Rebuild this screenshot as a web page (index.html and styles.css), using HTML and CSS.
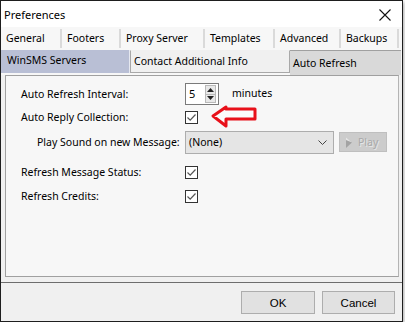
FILE: index.html
```html
<!DOCTYPE html>
<html>
<head>
<meta charset="utf-8">
<link rel="stylesheet" href="styles.css">
</head>
<body>
<div class="window">
  <div class="titlebar">
    <span class="title">Preferences</span>
    <svg class="close" width="12" height="12" viewBox="0 0 12 12"><path d="M0.5,0.5 L11.5,11.5 M11.5,0.5 L0.5,11.5" stroke="#111" stroke-width="1.1" fill="none"/></svg>
  </div>
  <div class="tabrow1">
    <div class="tab">General</div>
    <div class="tab">Footers</div>
    <div class="tab">Proxy Server</div>
    <div class="tab">Templates</div>
    <div class="tab">Advanced</div>
    <div class="tab">Backups</div>
  </div>
  <div class="tabrow2">
    <div class="tab2 hot">WinSMS Servers</div>
    <div class="tab2 plain">Contact Additional Info</div>
    <div class="tab2 active">Auto Refresh</div>
  </div>
  <div class="client">
    <div class="panel">
      <div class="row r1">
        <span class="label">Auto Refresh Interval:</span>
        <div class="spin">
          <span class="spinval">5</span>
          <div class="spinbtns">
            <div class="sb"><svg width="7" height="4" viewBox="0 0 7 4"><path d="M3.5,0 L7,4 L0,4 Z" fill="#222"/></svg></div>
            <div class="sb"><svg width="7" height="4" viewBox="0 0 7 4"><path d="M0,0 L7,0 L3.5,4 Z" fill="#222"/></svg></div>
          </div>
        </div>
        <span class="unit">minutes</span>
      </div>
      <div class="row r2">
        <span class="label">Auto Reply Collection:</span>
        <span class="check"><svg width="11" height="11" viewBox="0 0 11 11"><path d="M1.5,5.5 L4.2,8.2 L9.5,2.5" stroke="#555" stroke-width="1.2" fill="none"/></svg></span>
        <svg class="arrow" width="50" height="26" viewBox="0 0 50 26"><path d="M3,12 L16,3 L16,5 L45,5 L45,15 L16,15 L16,22 Z" stroke="#e8111a" stroke-width="3" stroke-linejoin="round" fill="#fbfbfb"/></svg>
      </div>
      <div class="row r3">
        <span class="label indent">Play Sound on new Message:</span>
        <div class="combo">
          <span>(None)</span>
          <svg width="9" height="5" viewBox="0 0 9 5"><path d="M0.5,0.5 L4.5,4.5 L8.5,0.5" stroke="#444" stroke-width="1" fill="none"/></svg>
        </div>
        <div class="play">
          <svg width="7" height="11" viewBox="0 0 7 11"><path d="M0,0 L6,5.5 L0,11 Z" fill="#a3a3a3"/><path d="M0,0 L6,5.5 L0,3 Z" fill="#e4e4e4"/></svg>
          <span>Play</span>
        </div>
      </div>
      <div class="row r4">
        <span class="label">Refresh Message Status:</span>
        <span class="check"><svg width="11" height="11" viewBox="0 0 11 11"><path d="M1.5,5.5 L4.2,8.2 L9.5,2.5" stroke="#555" stroke-width="1.2" fill="none"/></svg></span>
      </div>
      <div class="row r5">
        <span class="label">Refresh Credits:</span>
        <span class="check"><svg width="11" height="11" viewBox="0 0 11 11"><path d="M1.5,5.5 L4.2,8.2 L9.5,2.5" stroke="#555" stroke-width="1.2" fill="none"/></svg></span>
      </div>
    </div>
  </div>
  <div class="footer">
    <button class="btn ok">OK</button>
    <button class="btn cancel">Cancel</button>
  </div>
</div>
</body>
</html>
```
FILE: styles.css
```css
* { box-sizing: border-box; }
html, body { margin: 0; padding: 0; background: #ffffff; }
body { font-family: "Noto Sans", "Open Sans", sans-serif; font-size: 10.5px; color: #000; white-space: nowrap; }

.window {
  width: 403px;
  height: 322px;
  border: 1px solid #1e1e1e;
  background: #f0f0f0;
  display: flex;
  flex-direction: column;
  box-shadow: 1px 2px 4px rgba(0,0,0,0.35);
}

.titlebar {
  height: 26px;
  background: #ffffff;
  display: flex;
  align-items: center;
  justify-content: space-between;
  padding: 0 11px 0 3px;
  flex: none;
}
.title { font-size: 11px; }
.close { display: block; margin-top: 1px; }

.tabrow1 {
  height: 22px;
  background: #f7f7f7;
  display: flex;
  align-items: flex-end;
  flex: none;
}
.tab {
  height: 19px;
  line-height: 18px;
  padding-left: 5px;
  border-right: 2px solid #dadada;
  margin-bottom: 1px;
}
.tab:nth-child(1) { width: 61px; }
.tab:nth-child(2) { width: 59px; }
.tab:nth-child(3) { width: 84px; }
.tab:nth-child(4) { width: 70px; }
.tab:nth-child(5) { width: 66px; }
.tab:nth-child(6) { width: 58px; }

.tabrow2 {
  height: 26px;
  background: #f7f7f7;
  display: flex;
  align-items: flex-start;
  padding-top: 1px;
  flex: none;
}
.tab2 { height: 23px; line-height: 21px; }
.tab2.hot {
  width: 129px;
  background: #b9bfd5;
  padding-left: 6px;
  border-right: 1px solid #e6e8f0;
}
.tab2.plain {
  width: 160px;
  background: #f0f0f0;
  border: 1px solid #a8a8a8;
  border-top-color: #f0f0f0;
  padding-left: 3px;
  height: 23px;
}
.tab2.active {
  width: 111px;
  height: 25px;
  background: #d9d9d9;
  border-top: 1px solid #a0a0a0;
  line-height: 24px;
  padding-left: 3px;
}

.client {
  flex: 1;
  padding: 0 3px 5px 4px;
  display: flex;
  flex-direction: column;
}
.panel {
  flex: 1;
  background: #f7f7f7;
  border: 1px solid #a0a0a0;
  border-right-color: #b4b4b4;
  padding: 7px 0 0 15px;
  display: flex;
  flex-direction: column;
}

.row { display: flex; align-items: center; position: relative; }
.r1 { height: 22px; }
.r2 { height: 24px; }
.r3 { height: 24px; margin-top: 1px; }
.r4 { height: 24px; margin-top: 6px; }
.r5 { height: 24px; }

.label { width: 164px; flex: none; }
.label.indent { padding-left: 16px; }

.spin {
  width: 34px;
  height: 22px;
  background: #fff;
  border: 1px solid #7a7a7a;
  display: flex;
  align-items: center;
  padding: 1px 1px 1px 3px;
  justify-content: space-between;
}
.spinval { line-height: 18px; font-size: 11px; }
.spinbtns {
  width: 11px;
  height: 18px;
  display: flex;
  flex-direction: column;
  margin-right: 1px;
}
.sb {
  flex: 1;
  background: #e8e8e8;
  border: 1px solid #b9b9b9;
  display: flex;
  align-items: center;
  justify-content: center;
}
.sb + .sb { border-top: none; }
.sb svg { display: block; }
.unit { margin-left: 13px; margin-top: -3px; }

.check {
  width: 13px;
  height: 13px;
  border: 1px solid #333;
  background: #fff;
  display: flex;
  align-items: center;
  justify-content: center;
}
.check svg { display: block; }

.arrow {
  position: absolute;
  left: 189px;
  top: -1px;
}

.combo {
  width: 149px;
  height: 23px;
  background: #e5e5e5;
  border: 1px solid #adadad;
  display: flex;
  align-items: center;
  justify-content: space-between;
  padding: 0 6px 0 3px;
}
.combo svg { display: block; }

.play {
  width: 48px;
  height: 20px;
  margin-left: 5px;
  background: #cccccc;
  border: 1px solid #bfbfbf;
  display: flex;
  align-items: center;
  padding-left: 6px;
  gap: 5px;
  color: #a9a9a9;
}
.play svg { display: block; }
.play span { text-shadow: 1px 1px 0 #e6e6e6; }

.footer {
  height: 39px;
  border-top: 1px solid #6d6d6d;
  display: flex;
  justify-content: flex-end;
  align-items: flex-start;
  padding: 8px 7px 0 0;
  gap: 7px;
  flex: none;
}
.btn {
  height: 23px;
  background: #e1e1e1;
  border: 1px solid #adadad;
  font-family: "Liberation Sans", Arial, sans-serif;
  font-size: 11.5px;
  color: #000;
  padding: 0;
  margin: 0;
}
.btn.ok { width: 74px; }
.btn.cancel { width: 73px; }
```
